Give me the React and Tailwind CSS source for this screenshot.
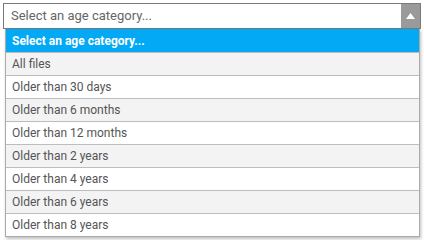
import React from "react";

const options = [
  "All files",
  "Older than 30 days",
  "Older than 6 months",
  "Older than 12 months",
  "Older than 2 years",
  "Older than 4 years",
  "Older than 6 years",
  "Older than 8 years",
];

const App = () => {
  return (
    <div
      className="w-[424px] h-[240px] bg-white pt-[3px] pl-[3px] overflow-hidden"
      style={{ fontFamily: "Roboto, 'Liberation Sans', sans-serif" }}
    >
      <div className="relative w-[418px]">
        {/* Select box */}
        <div className="flex h-[26px] border border-[#7a7a7a] bg-white">
          <div className="flex-1 flex items-center pl-[7px] text-[13px] text-[#666]">
            Select an age category...
          </div>
          <div className="w-[19px] bg-[#9a9a9a] flex items-center justify-center">
            <svg width="9" height="6" viewBox="0 0 9 6">
              <polygon points="4.5,0 9,6 0,6" fill="#fff" />
            </svg>
          </div>
        </div>

        {/* Dropdown list */}
        <div className="absolute left-[2px] right-[1px] top-[26px] border-x border-b border-[#aaa] bg-white shadow-[1px_2px_3px_rgba(0,0,0,0.25)]">
          <div className="h-[23px] flex items-center px-[6px] bg-[#03a9f4] text-white text-[12px] font-bold">
            Select an age category...
          </div>
          {options.map((opt, i) => (
            <div
              key={opt}
              className={`h-[23px] flex items-center px-[6px] border-t border-[#bdbdbd] text-[12px] font-normal text-[#555] ${
                i % 2 === 0 ? "bg-[#f3f3f3]" : "bg-white"
              }`}
            >
              {opt}
            </div>
          ))}
        </div>
      </div>
    </div>
  );
};

export default App;
